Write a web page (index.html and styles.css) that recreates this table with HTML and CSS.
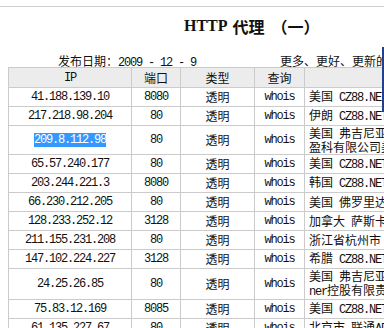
FILE: index.html
```html
<!DOCTYPE html>
<html lang="zh">
<head>
<meta charset="utf-8">
<title>HTTP 代理 （一）</title>
<link rel="stylesheet" href="styles.css">
</head>
<body>
<div class="page">
  <div class="rule"></div>
  <h1 class="title"><span class="t-en">HTTP</span><span class="t-cn">代理</span><span class="t-no">（一）</span></h1>
  <div class="meta">
    <span class="date">发布日期：<span class="en">2009 - 12 - 9</span></span>
    <span class="more">更多、更好、更新的代理请访问本站</span>
  </div>
  <table class="proxy">
    <colgroup>
      <col class="c-ip"><col class="c-port"><col class="c-type"><col class="c-q"><col class="c-loc">
    </colgroup>
    <thead>
      <tr><th class="en">IP</th><th>端口</th><th>类型</th><th>查询</th><th></th></tr>
    </thead>
    <tbody>
      <tr><td class="en">41.188.139.10</td><td class="en">8080</td><td>透明</td><td class="en">whois</td><td class="loc">美国 <span class="en">CZ88.NET</span></td></tr>
      <tr><td class="en">217.218.98.204</td><td class="en">80</td><td>透明</td><td class="en">whois</td><td class="loc">伊朗 <span class="en">CZ88.NET</span></td></tr>
      <tr><td class="en"><span class="sel">209.8.112.98</span></td><td class="en">80</td><td>透明</td><td class="en">whois</td><td class="loc">美国 弗吉尼亚州赫恩登市电讯<br>盈科有限公司美国分公司</td></tr>
      <tr><td class="en">65.57.240.177</td><td class="en">80</td><td>透明</td><td class="en">whois</td><td class="loc">美国 <span class="en">CZ88.NET</span></td></tr>
      <tr><td class="en">203.244.221.3</td><td class="en">8080</td><td>透明</td><td class="en">whois</td><td class="loc">韩国 <span class="en">CZ88.NET</span></td></tr>
      <tr><td class="en">66.230.212.205</td><td class="en">80</td><td>透明</td><td class="en">whois</td><td class="loc">美国 佛罗里达州</td></tr>
      <tr><td class="en">128.233.252.12</td><td class="en">3128</td><td>透明</td><td class="en">whois</td><td class="loc">加拿大 萨斯卡彻温省</td></tr>
      <tr><td class="en">211.155.231.208</td><td class="en">80</td><td>透明</td><td class="en">whois</td><td class="loc">浙江省杭州市 电信</td></tr>
      <tr><td class="en">147.102.224.227</td><td class="en">3128</td><td>透明</td><td class="en">whois</td><td class="loc">希腊 <span class="en">CZ88.NET</span></td></tr>
      <tr><td class="en">24.25.26.85</td><td class="en">80</td><td>透明</td><td class="en">whois</td><td class="loc">美国 弗吉尼亚州Time War<br><span class="en">ner</span>控股有限责任公司</td></tr>
      <tr><td class="en">75.83.12.169</td><td class="en">8085</td><td>透明</td><td class="en">whois</td><td class="loc">美国 <span class="en">CZ88.NET</span></td></tr>
      <tr><td class="en">61.135.227.67</td><td class="en">80</td><td>透明</td><td class="en">whois</td><td class="loc">北京市 联通<span class="en">ADSL</span></td></tr>
    </tbody>
  </table>
  <div class="edge"></div>
</div>
</body>
</html>
```

FILE: styles.css
```css
html, body {
  margin: 0;
  padding: 0;
  background: #ffffff;
  overflow: hidden;
}

body {
  font-family: "Noto Sans CJK SC", "Liberation Mono", sans-serif;
  font-size: 12px;
  color: #111111;
}

.page {
  position: relative;
  width: 489px;
  padding-left: 8px;
}

.rule {
  margin: 6px 0 0 -8px;
  width: 600px;
  border-top: 1px solid #cfcfcf;
}

.title {
  display: flex;
  margin: 9px 0 0 0;
  padding-left: 176px;
  height: 20px;
  line-height: 20px;
  font-size: 16px;
  font-weight: bold;
  color: #111111;
  white-space: nowrap;
}

.t-en {
  font-family: "Liberation Serif", serif;
  margin-right: 5px;
}

.t-cn {
  margin-right: 7px;
}

.meta {
  display: flex;
  margin-top: 18px;
  height: 13px;
  line-height: 13px;
  white-space: nowrap;
}

.date {
  width: 222px;
  padding-left: 50px;
  box-sizing: border-box;
}

.more {
  padding-left: 50px;
}

.en {
  font-family: "Liberation Mono", monospace;
  letter-spacing: -1.2px;
}

.proxy {
  border-collapse: collapse;
  table-layout: fixed;
  width: 489px;
}

.c-ip { width: 123px; }
.c-port { width: 49px; }
.c-type { width: 74px; }
.c-q { width: 50px; }
.c-loc { width: 193px; }

.proxy th,
.proxy td {
  border: 1px solid #cbcbcb;
  padding: 0;
  text-align: center;
  vertical-align: middle;
  line-height: 14px;
  white-space: nowrap;
  overflow: hidden;
}

.proxy th {
  height: 19px;
  background: #ececec;
  font-weight: normal;
}

.proxy td {
  height: 18px;
}

.proxy td.loc {
  text-align: left;
  padding-left: 4px;
  word-spacing: 3.3px;
}

.sel {
  background: #3399ff;
  color: #ffffff;
}

.edge {
  position: absolute;
  left: 382px;
  top: 41px;
  width: 2px;
  height: 65px;
  background: #23408a;
}
```
